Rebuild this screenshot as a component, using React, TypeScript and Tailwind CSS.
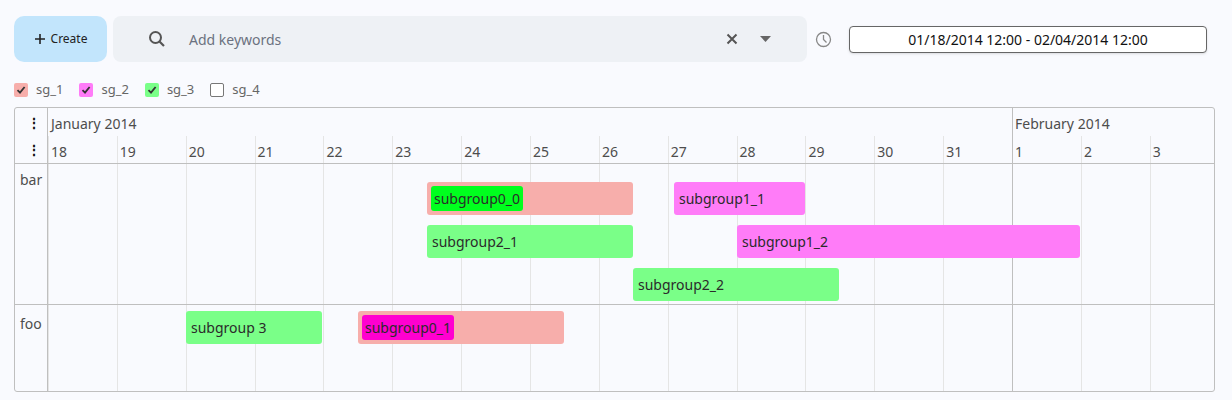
import React from "react";

const D = 68.86;
const days = ["18","19","20","21","22","23","24","25","26","27","28","29","30","31","1","2","3"];

type Item = { x: number; w: number; y: number; bg: string; label: string; inner?: string };
const barItems: Item[] = [
  { x: 379, w: 206, y: 18, bg: "#f7aeab", label: "subgroup0_0", inner: "#00ff1e" },
  { x: 379, w: 206, y: 61, bg: "#7aff88", label: "subgroup2_1" },
  { x: 585, w: 206, y: 104, bg: "#7aff88", label: "subgroup2_2" },
  { x: 626, w: 131, y: 18, bg: "#ff7cf8", label: "subgroup1_1" },
  { x: 689, w: 343, y: 61, bg: "#ff7cf8", label: "subgroup1_2" },
];
const fooItems: Item[] = [
  { x: 138, w: 136, y: 6, bg: "#7aff88", label: "subgroup 3" },
  { x: 310, w: 206, y: 6, bg: "#f7aeab", label: "subgroup0_1", inner: "#ff00d0" },
];

function Grid() {
  return (
    <>
      {days.map((_, i) => (
        <div key={i} className={`absolute top-0 bottom-0 w-px ${i === 14 ? "bg-[#bfbfbf]" : "bg-[#e5e5e5]"}`} style={{ left: i * D }} />
      ))}
    </>
  );
}

function Items({ items }: { items: Item[] }) {
  return (
    <>
      {items.map((it) => (
        <div key={it.label} className="absolute h-[33px] rounded-[3px] flex items-center px-[4px] text-[14px] text-[#2b2b2b]" style={{ left: it.x, width: it.w, top: it.y, background: it.bg }}>
          {it.inner ? (
            <span className="rounded-[3px] px-[3px] h-[25px] flex items-center" style={{ background: it.inner }}>{it.label}</span>
          ) : (
            <span className="pl-[1px]">{it.label}</span>
          )}
        </div>
      ))}
    </>
  );
}

function Check({ color, checked }: { color: string; checked: boolean }) {
  return (
    <span className={`w-[14px] h-[14px] rounded-[2px] flex items-center justify-center ${checked ? "" : "border border-[#777] bg-white"}`} style={checked ? { background: color } : {}}>
      {checked && (
        <svg width="10" height="10" viewBox="0 0 10 10"><path d="M1.5 5.2 L4 7.6 L8.6 2" stroke="#333" strokeWidth="1.8" fill="none" /></svg>
      )}
    </span>
  );
}

export default function App() {
  return (
    <div className="w-[1232px] h-[400px] bg-[#f9fafe] overflow-hidden text-[#333]" style={{ fontFamily: '"Noto Sans", "Open Sans", sans-serif' }}>
      <div className="flex items-center pt-[16px] pl-[14px] h-[62px]">
        <button className="w-[93px] h-[46px] rounded-[10px] bg-[#c2e5fc] flex items-center justify-center gap-[5px] text-[12px] text-[#222]">
          <svg width="12" height="12" viewBox="0 0 12 12"><path d="M6 1v10M1 6h10" stroke="#222" strokeWidth="1.6" /></svg>
          Create
        </button>
        <div className="ml-[6px] w-[694px] h-[46px] rounded-[8px] bg-[#eef1f5] flex items-center text-[14px]">
          <svg className="ml-[35px]" width="18" height="18" viewBox="0 0 18 18"><circle cx="7.5" cy="7.5" r="5.5" stroke="#555" strokeWidth="2" fill="none" /><path d="M11.5 11.5 16 16" stroke="#555" strokeWidth="2.2" /></svg>
          <span className="ml-[23px] text-[#6b7280] flex-1">Add keywords</span>
          <svg width="12" height="12" viewBox="0 0 12 12"><path d="M1.5 1.5 10.5 10.5M10.5 1.5 1.5 10.5" stroke="#555" strokeWidth="2" /></svg>
          <svg className="ml-[22px] mr-[36px]" width="11" height="6" viewBox="0 0 11 6"><path d="M0 0h11L5.5 6z" fill="#666" /></svg>
        </div>
        <svg className="ml-[8px]" width="17" height="17" viewBox="0 0 17 17"><circle cx="8.5" cy="8.5" r="7" stroke="#888" strokeWidth="1.3" fill="none" /><path d="M8.5 4v4.5l3 3" stroke="#888" strokeWidth="1.3" fill="none" /></svg>
        <div className="ml-[17px] w-[358px] h-[27px] rounded-[4px] border border-[#666] bg-white flex items-center justify-center text-[14px] text-[#111] shadow-sm">
          01/18/2014 12:00 - 02/04/2014 12:00
        </div>
      </div>
      <div className="flex items-center pl-[14px] mt-[19px] h-[18px] text-[13px] text-[#666]">
        <Check color="#f7aeab" checked /><span className="ml-[8px] mr-[16px]">sg_1</span>
        <Check color="#ff7cf8" checked /><span className="ml-[8px] mr-[16px]">sg_2</span>
        <Check color="#7aff88" checked /><span className="ml-[8px] mr-[16px]">sg_3</span>
        <Check color="" checked={false} /><span className="ml-[8px]">sg_4</span>
      </div>
      <div className="ml-[14px] mt-[8px] w-[1201px] h-[285px] border border-[#bfbfbf] rounded-[3px] flex overflow-hidden text-[14px] text-[#4d4d4d]">
        <div className="w-[33px] border-r border-[#bfbfbf] flex flex-col shrink-0">
          <div className="h-[28px] flex items-center justify-end pr-[6px] font-bold text-[#111]">⋮</div>
          <div className="h-[28px] flex items-center justify-end pr-[6px] font-bold text-[#111] border-b border-[#bfbfbf]">⋮</div>
          <div className="h-[141px] border-b border-[#bfbfbf] pl-[5px] pt-[5px]">bar</div>
          <div className="flex-1 pl-[5px] pt-[8px]">foo</div>
        </div>
        <div className="flex-1 flex flex-col">
          <div className="h-[28px] relative">
            <span className="absolute left-[3px] top-[5px]">January 2014</span>
            <div className="absolute top-0 bottom-0 w-px bg-[#bfbfbf]" style={{ left: 14 * D }} />
            <span className="absolute top-[5px]" style={{ left: 14 * D + 3 }}>February 2014</span>
          </div>
          <div className="h-[28px] relative border-b border-[#bfbfbf]">
            <Grid />
            {days.map((d, i) => (
              <span key={i} className="absolute top-[5px]" style={{ left: i * D + 3 }}>{d}</span>
            ))}
          </div>
          <div className="h-[141px] relative border-b border-[#bfbfbf]">
            <Grid />
            <Items items={barItems} />
          </div>
          <div className="flex-1 relative">
            <Grid />
            <Items items={fooItems} />
          </div>
        </div>
      </div>
    </div>
  );
}
